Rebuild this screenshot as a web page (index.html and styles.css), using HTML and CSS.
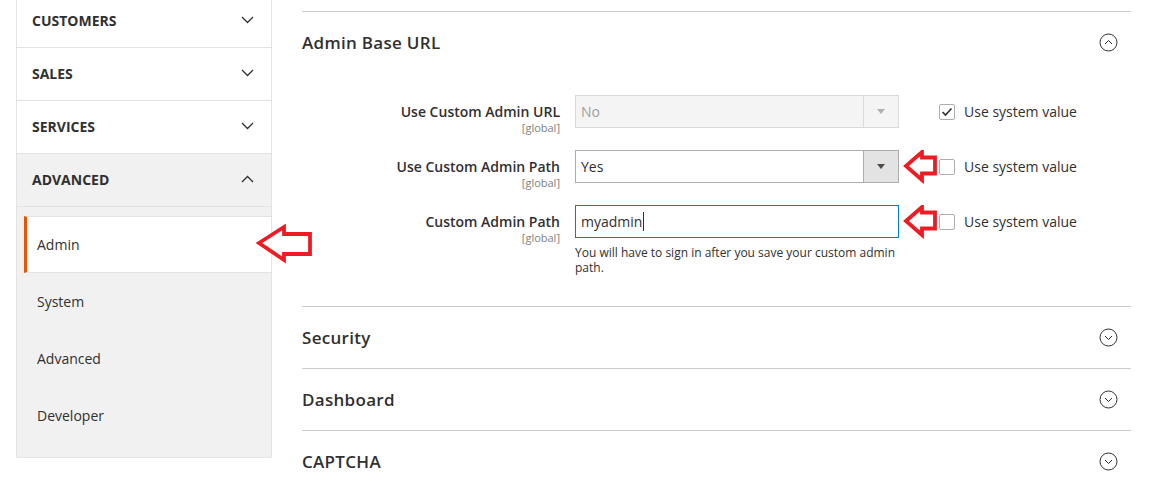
FILE: index.html
```html
<!DOCTYPE html>
<html>
  <head>
    <link rel="stylesheet" href="styles.css">
  </head>
  <body>
    <div class="page">
      <div class="sidebar">
        <div class="nav-group">
          <span>Customers</span>
          <svg class="chevron" width="13" height="8" viewBox="0 0 13 8"><polyline points="1,1 6.5,6.5 12,1"/></svg>
        </div>
        <div class="nav-group">
          <span>Sales</span>
          <svg class="chevron" width="13" height="8" viewBox="0 0 13 8"><polyline points="1,1 6.5,6.5 12,1"/></svg>
        </div>
        <div class="nav-group">
          <span>Services</span>
          <svg class="chevron" width="13" height="8" viewBox="0 0 13 8"><polyline points="1,1 6.5,6.5 12,1"/></svg>
        </div>
        <div class="nav-group open">
          <span>Advanced</span>
          <svg class="chevron" width="13" height="8" viewBox="0 0 13 8"><polyline points="1,7 6.5,1.5 12,7"/></svg>
        </div>
        <ul class="nav-sub">
          <li class="nav-item active">
            Admin
            <svg class="big-arrow" width="58" height="42" viewBox="0 0 58 42">
              <polygon points="3,19 28,3 28,10 54,10 54,30 28,30 28,36"/>
            </svg>
          </li>
          <li class="nav-item">System</li>
          <li class="nav-item">Advanced</li>
          <li class="nav-item">Developer</li>
        </ul>
      </div>

      <div class="main">
        <div class="section">
          <div class="section-head">
            <span>Admin Base URL</span>
            <svg class="toggle" width="19" height="19" viewBox="0 0 19 19"><circle cx="9.5" cy="9.5" r="8.5"/><polyline points="6,11 9.5,7.5 13,11"/></svg>
          </div>
          <div class="fieldset">
            <div class="row">
              <div class="label">
                <span class="label-title">Use Custom Admin URL</span>
                <span class="scope">[global]</span>
              </div>
              <div class="control">
                <div class="select disabled">
                  <span class="select-value">No</span>
                  <span class="select-btn"><i class="caret"></i></span>
                </div>
              </div>
              <div class="arrow-slot"></div>
              <div class="use-default">
                <span class="checkbox">
                  <svg width="12" height="10" viewBox="0 0 12 10"><polyline points="1.5,5 4.5,8 10.5,1.5"/></svg>
                </span>
                Use system value
              </div>
            </div>

            <div class="row">
              <div class="label">
                <span class="label-title">Use Custom Admin Path</span>
                <span class="scope">[global]</span>
              </div>
              <div class="control">
                <div class="select">
                  <span class="select-value">Yes</span>
                  <span class="select-btn"><i class="caret"></i></span>
                </div>
              </div>
              <div class="arrow-slot">
                <svg width="36" height="34" viewBox="0 0 36 34"><polygon points="3,16 19,2 19,7.5 32,7.5 32,23.5 19,23.5 19,30"/></svg>
              </div>
              <div class="use-default">
                <span class="checkbox"></span>
                Use system value
              </div>
            </div>

            <div class="row">
              <div class="label">
                <span class="label-title">Custom Admin Path</span>
                <span class="scope">[global]</span>
              </div>
              <div class="control">
                <div class="input focused">myadmin<span class="cursor"></span></div>
                <p class="note">You will have to sign in after you save your custom admin path.</p>
              </div>
              <div class="arrow-slot">
                <svg width="36" height="34" viewBox="0 0 36 34"><polygon points="3,16 19,2 19,7.5 32,7.5 32,23.5 19,23.5 19,30"/></svg>
              </div>
              <div class="use-default">
                <span class="checkbox"></span>
                Use system value
              </div>
            </div>
          </div>
        </div>

        <div class="section">
          <div class="section-head">
            <span>Security</span>
            <svg class="toggle" width="19" height="19" viewBox="0 0 19 19"><circle cx="9.5" cy="9.5" r="8.5"/><polyline points="6,8 9.5,11.5 13,8"/></svg>
          </div>
        </div>
        <div class="section">
          <div class="section-head">
            <span>Dashboard</span>
            <svg class="toggle" width="19" height="19" viewBox="0 0 19 19"><circle cx="9.5" cy="9.5" r="8.5"/><polyline points="6,8 9.5,11.5 13,8"/></svg>
          </div>
        </div>
        <div class="section">
          <div class="section-head">
            <span>CAPTCHA</span>
            <svg class="toggle" width="19" height="19" viewBox="0 0 19 19"><circle cx="9.5" cy="9.5" r="8.5"/><polyline points="6,8 9.5,11.5 13,8"/></svg>
          </div>
        </div>
      </div>
    </div>
  </body>
</html>
```

FILE: styles.css
```css
body {
  margin: 0;
  font-family: "Open Sans", "Liberation Sans", sans-serif;
  color: #303030;
  background: #fff;
  overflow: hidden;
}
.page {
  display: flex;
  align-items: flex-start;
}

/* left navigation */
.sidebar {
  width: 256px;
  flex: none;
  margin: -5px 0 0 16px;
  box-sizing: border-box;
  border-left: 1px solid #e3e3e3;
  border-right: 1px solid #e3e3e3;
}
.nav-group {
  display: flex;
  align-items: center;
  justify-content: space-between;
  height: 52px;
  box-sizing: border-box;
  padding: 0 17px 2px 15px;
  height: 53px;
  border-bottom: 1px solid #e3e3e3;
  font-size: 14px;
  font-weight: 700;
  text-transform: uppercase;
  color: #303030;
}
.nav-group.open {
  background: #f1f1f1;
}
.chevron polyline {
  fill: none;
  stroke: #303030;
  stroke-width: 1.3;
}
.nav-sub {
  list-style: none;
  margin: 0;
  padding: 9px 0 13px 7px;
  background: #f1f1f1;
  border-bottom: 1px solid #e3e3e3;
}
.nav-item {
  display: flex;
  align-items: center;
  height: 57px;
  box-sizing: border-box;
  padding-left: 10px;
  border-left: 3px solid transparent;
  font-size: 14px;
  color: #303030;
}
.nav-item.active {
  position: relative;
  background: #fff;
  border-left-color: #eb5202;
  border-top: 1px solid #e3e3e3;
  border-bottom: 1px solid #e3e3e3;
}
.big-arrow {
  position: absolute;
  left: 229px;
  top: 7px;
}
.big-arrow polygon,
.arrow-slot polygon {
  fill: #fff;
  stroke: #ed1c24;
  stroke-width: 3.8;
  stroke-linejoin: miter;
}

/* main content */
.main {
  flex: 1;
  margin: 0 20px 0 30px;
  padding-top: 11px;
}
.section {
  border-top: 1px solid #cccccc;
}
.section-head {
  display: flex;
  align-items: center;
  justify-content: space-between;
  height: 61px;
  padding-right: 13px;
  font-size: 17px;
  font-weight: 600;
  letter-spacing: 0.3px;
  color: #303030;
}
.toggle circle,
.toggle polyline {
  fill: none;
  stroke: #303030;
  stroke-width: 1;
}
.fieldset {
  padding: 22px 0 31px;
}
.row {
  display: flex;
  align-items: flex-start;
  margin-bottom: 16px;
}
.row:last-child {
  margin-bottom: 0;
}
.label {
  width: 258px;
  flex: none;
  padding-top: 7px;
  display: flex;
  flex-direction: column;
  align-items: flex-end;
}
.label-title {
  font-size: 14px;
  font-weight: 600;
  line-height: 19px;
}
.scope {
  font-size: 11px;
  line-height: 13px;
  color: #808080;
}
.control {
  width: 324px;
  flex: none;
  margin-left: 15px;
}
.select,
.input {
  display: flex;
  align-items: center;
  height: 33px;
  box-sizing: border-box;
  border: 1px solid #adadad;
  background: #fff;
  font-size: 14px;
}
.select-value {
  flex: 1;
  padding-left: 5px;
}
.select-btn {
  width: 34px;
  height: 100%;
  display: flex;
  align-items: center;
  justify-content: center;
  border-left: 1px solid #adadad;
  background: #e3e3e3;
}
.caret {
  width: 0;
  height: 0;
  border-left: 4px solid transparent;
  border-right: 4px solid transparent;
  border-top: 5px solid #514943;
}
.select.disabled {
  background: #f4f4f4;
  border-color: #d9d9d9;
  color: #a0a0a0;
}
.select.disabled .select-btn {
  background: #f4f4f4;
  border-left-color: #d9d9d9;
}
.select.disabled .caret {
  border-top-color: #b0b0b0;
}
.input {
  padding-left: 5px;
}
.input.focused {
  border-color: #007bdb;
}
.cursor {
  display: inline-block;
  width: 1px;
  height: 19px;
  margin-left: 1px;
  background: #303030;
}
.note {
  margin: 7px 0 0;
  font-size: 12px;
  line-height: 15px;
  color: #303030;
}
.arrow-slot {
  width: 40px;
  height: 33px;
  flex: none;
  display: flex;
  align-items: center;
  justify-content: flex-end;
}
.use-default {
  display: flex;
  align-items: center;
  height: 33px;
  font-size: 14px;
  color: #303030;
}
.checkbox {
  width: 16px;
  height: 16px;
  box-sizing: border-box;
  margin-right: 9px;
  border: 1px solid #adadad;
  border-radius: 2px;
  background: #fff;
  display: flex;
  align-items: center;
  justify-content: center;
}
.checkbox polyline {
  fill: none;
  stroke: #303030;
  stroke-width: 1.6;
}
```
